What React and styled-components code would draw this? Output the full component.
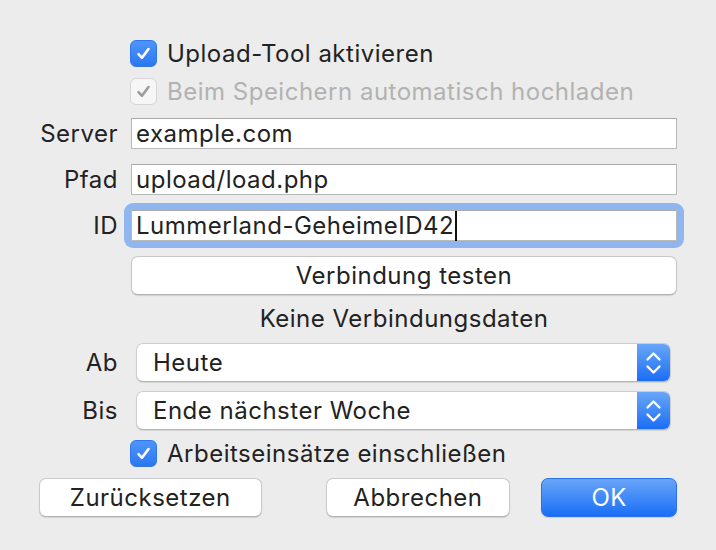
import React from 'react';
import styled, { createGlobalStyle } from 'styled-components';

const GlobalStyle = createGlobalStyle`
  html, body {
    margin: 0;
    padding: 0;
    background: #ececec;
  }
  body {
    font-family: Inter, "Noto Sans", sans-serif;
    color: #222;
  }
`;

const Dialog = styled.div`
  width: 716px;
  height: 550px;
  box-sizing: border-box;
  padding: 40px 39px 0 39px;
  display: flex;
  flex-direction: column;
  font-size: 24px;
  letter-spacing: 0.5px;
`;

const Form = styled.div`
  display: grid;
  grid-template-columns: 79px 546px;
  column-gap: 13px;
  align-items: center;
`;

const Label = styled.div`
  text-align: right;
  line-height: 1;
  margin-top: ${p => p.$top || 0}px;
`;

const CheckRow = styled.label`
  grid-column: 2;
  display: flex;
  align-items: center;
  gap: 10px;
  margin-top: ${p => p.$top || 0}px;
  color: ${p => (p.$disabled ? '#b2b2b2' : '#222')};
  height: 27px;
  margin-left: -1px;
`;

const Box = styled.span`
  width: 27px;
  height: 27px;
  box-sizing: border-box;
  border-radius: 6px;
  display: flex;
  align-items: center;
  justify-content: center;
  flex: none;
  background: ${p => (p.$disabled ? '#f6f6f6' : 'linear-gradient(#4f95f8, #2b77f1)')};
  border: 1px solid ${p => (p.$disabled ? '#d6d6d6' : '#2f78e8')};
`;

const TextField = styled.div`
  height: 31px;
  box-sizing: border-box;
  background: #fff;
  border: 1px solid #b9b9b9;
  border-top-color: #a9a9a9;
  padding: 0 4px;
  display: flex;
  align-items: center;
  white-space: nowrap;
  margin-top: ${p => p.$top || 0}px;
`;

const FocusRing = styled.div`
  margin: ${p => p.$top - 7}px -7px -7px -7px;
  padding: 7px;
  border-radius: 9px;
  background: #8fb6ee;
`;

const Caret = styled.span`
  display: inline-block;
  width: 2px;
  height: 30px;
  background: #111;
  margin-left: 1px;
`;

const PushButton = styled.button`
  font: inherit;
  letter-spacing: inherit;
  color: #222;
  height: 39px;
  box-sizing: border-box;
  background: #fff;
  border: 1px solid #c9c9c9;
  border-bottom-color: #b3b3b3;
  border-radius: 7px;
  box-shadow: 0 1px 1px rgba(0, 0, 0, 0.12);
  padding: 0;
  width: ${p => (p.$width ? `${p.$width}px` : 'auto')};
  margin-top: ${p => p.$top || 0}px;
  margin-left: ${p => p.$left || 0}px;
`;

const DefaultButton = styled(PushButton)`
  color: #fff;
  border: 1px solid #2a72ec;
  background: linear-gradient(#69a5f8, #1a6ef6);
`;

const Status = styled.div`
  grid-column: 2;
  text-align: center;
  margin-top: 11px;
  height: 26px;
  line-height: 26px;
`;

const Popup = styled.div`
  height: 39px;
  box-sizing: border-box;
  margin: ${p => p.$top || 0}px 6px 0 5px;
  display: flex;
  background: #fff;
  border-radius: 7px;
  border: 1px solid #cfcfcf;
  border-bottom-color: #b5b5b5;
  box-shadow: 0 1px 1px rgba(0, 0, 0, 0.1);
  overflow: hidden;
`;

const PopupText = styled.div`
  flex: 1;
  display: flex;
  align-items: center;
  padding-left: 16px;
`;

const Stepper = styled.div`
  width: 33px;
  flex: none;
  background: linear-gradient(#6aa6f8, #1a6ef6);
  display: flex;
  align-items: center;
  justify-content: center;
`;

const Footer = styled.div`
  display: flex;
  align-items: center;
  margin-top: 11px;
`;

const Check = ({ color }) => (
  <svg width="17" height="17" viewBox="0 0 17 17">
    <path d="M3.5 9.2 L7 12.8 L13.5 4" fill="none" stroke={color} strokeWidth="2.6" strokeLinecap="round" strokeLinejoin="round" />
  </svg>
);

const Chevrons = () => (
  <svg width="17" height="26" viewBox="0 0 17 26">
    <path d="M2.5 9.5 L8.5 3.5 L14.5 9.5 M2.5 16.5 L8.5 22.5 L14.5 16.5" fill="none" stroke="#fff" strokeWidth="2.4" strokeLinecap="round" strokeLinejoin="round" />
  </svg>
);

const App = () => (
  <Dialog>
    <GlobalStyle />
    <Form>
      <CheckRow>
        <Box><Check color="#fff" /></Box>
        Upload-Tool aktivieren
      </CheckRow>
      <CheckRow $top={11} $disabled>
        <Box $disabled><Check color="#9b9b9b" /></Box>
        Beim Speichern automatisch hochladen
      </CheckRow>

      <Label $top={13}>Server</Label>
      <TextField $top={13}>example.com</TextField>

      <Label $top={15}>Pfad</Label>
      <TextField $top={15}>upload/load.php</TextField>

      <Label $top={15}>ID</Label>
      <FocusRing $top={15}>
        <TextField>Lummerland-GeheimeID42<Caret /></TextField>
      </FocusRing>

      <span />
      <PushButton $top={15}>Verbindung testen</PushButton>

      <Status>Keine Verbindungsdaten</Status>

      <Label $top={11}>Ab</Label>
      <Popup $top={11}>
        <PopupText>Heute</PopupText>
        <Stepper><Chevrons /></Stepper>
      </Popup>

      <Label $top={9}>Bis</Label>
      <Popup $top={9}>
        <PopupText>Ende nächster Woche</PopupText>
        <Stepper><Chevrons /></Stepper>
      </Popup>

      <CheckRow $top={10}>
        <Box><Check color="#fff" /></Box>
        Arbeitseinsätze einschließen
      </CheckRow>
    </Form>

    <Footer>
      <PushButton $width={223}>Zurücksetzen</PushButton>
      <PushButton $width={185} $left={64}>Abbrechen</PushButton>
      <DefaultButton $width={136} $left={31}>OK</DefaultButton>
    </Footer>
  </Dialog>
);

export default App;
